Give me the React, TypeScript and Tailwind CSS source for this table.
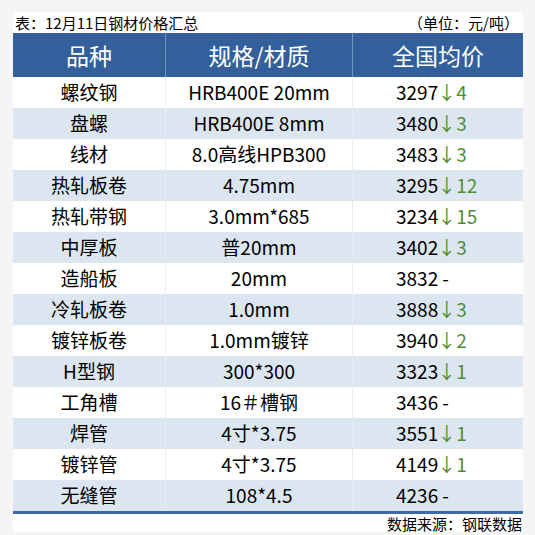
const rows: [string, string, string, string][] = [
  ['螺纹钢', 'HRB400E 20mm', '3297', '4'],
  ['盘螺', 'HRB400E 8mm', '3480', '3'],
  ['线材', '8.0高线HPB300', '3483', '3'],
  ['热轧板卷', '4.75mm', '3295', '12'],
  ['热轧带钢', '3.0mm*685', '3234', '15'],
  ['中厚板', '普20mm', '3402', '3'],
  ['造船板', '20mm', '3832', ''],
  ['冷轧板卷', '1.0mm', '3888', '3'],
  ['镀锌板卷', '1.0mm镀锌', '3940', '2'],
  ['H型钢', '300*300', '3323', '1'],
  ['工角槽', '16＃槽钢', '3436', ''],
  ['焊管', '4寸*3.75', '3551', '1'],
  ['镀锌管', '4寸*3.75', '4149', '1'],
  ['无缝管', '108*4.5', '4236', ''],
];

export default function App() {
  return (
    <div
      className="w-[535px] h-[535px] bg-[#f5f5f5] pt-[12px] pl-[13px] text-black"
      style={{ fontFamily: '"Noto Sans CJK SC", "Noto Sans", sans-serif' }}
    >
      <div className="w-[510px] bg-white">
        {/* Title */}
        <div className="h-[21px] flex items-center justify-between pl-[2px] pr-[4px] text-[15px] leading-none">
          <span>表：12月11日钢材价格汇总</span>
          <span>（单位：元/吨）</span>
        </div>

        {/* Header */}
        <div className="h-[44px] grid grid-cols-[153px_187px_170px] bg-[#33609a] text-white text-[23px]">
          <div className="flex items-center justify-center border-r border-[#6f92bf]">品种</div>
          <div className="flex items-center justify-center border-r border-[#6f92bf]">规格/材质</div>
          <div className="flex items-center justify-center">全国均价</div>
        </div>

        {/* Body */}
        <div className="border-b-[3px] border-[#3d6aa3]">
          {rows.map(([name, spec, price, change], i) => (
            <div
              key={name}
              className={`h-[31px] grid grid-cols-[153px_187px_170px] text-[19px] ${i % 2 === 1 ? 'bg-[#dce6f1]' : 'bg-white'}`}
            >
              <div className="flex items-center justify-center border-r border-[#e8ecf1]">{name}</div>
              <div className="flex items-center justify-center border-r border-[#e8ecf1]">{spec}</div>
              <div className="flex items-center pl-[43px]">
                <span>{price}</span>
                {change ? (
                  <span className="text-[#4f8f33] -ml-[1px]">↓{change}</span>
                ) : (
                  <span className="ml-[4px]">-</span>
                )}
              </div>
            </div>
          ))}
        </div>

        {/* Footer */}
        <div className="h-[18px] flex items-center justify-end text-[15px] leading-none pr-[1px]">
          数据来源：钢联数据
        </div>
      </div>
    </div>
  );
}
